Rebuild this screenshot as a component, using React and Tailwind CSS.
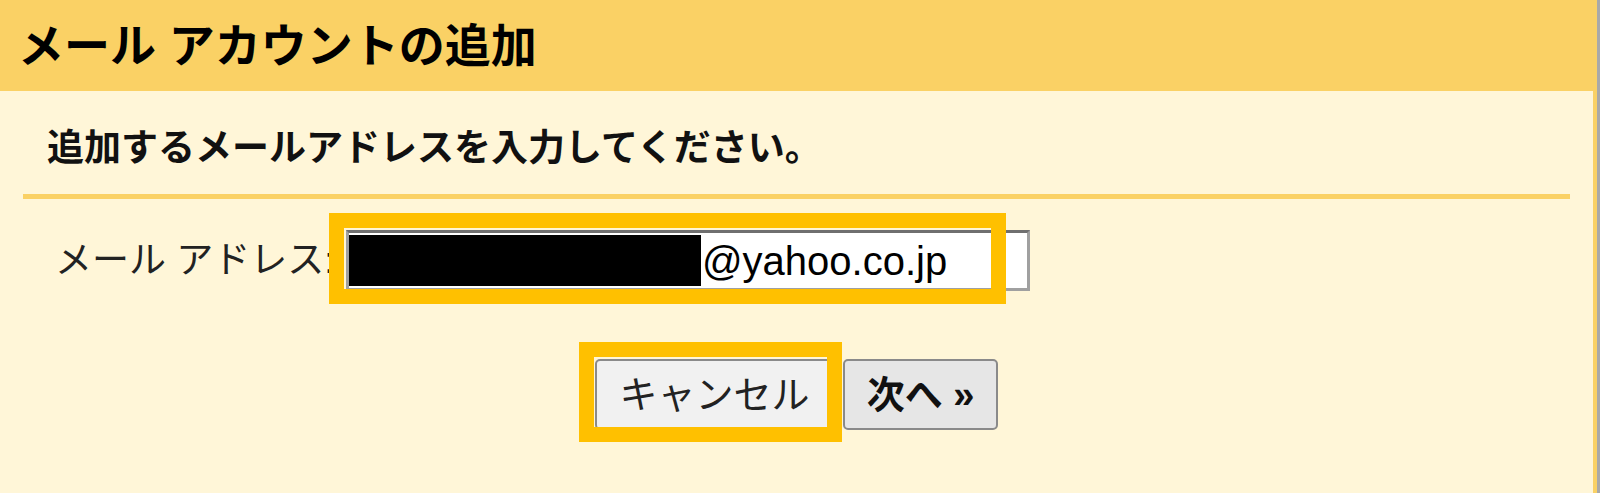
import React from "react";

const font = { fontFamily: '"Liberation Sans", "Noto Sans CJK JP", sans-serif' };

function Highlight({ className }) {
  return <div className={"pointer-events-none absolute border-[15px] border-[#ffc000] " + className} />;
}

export default function App() {
  return (
    <div className="w-full h-[493px] overflow-hidden bg-[#a9a9a9] flex" style={font}>
      <div className="w-[1597px] h-full border-r-4 border-[#fad165] flex flex-col">
        {/* header */}
        <div className="h-[91px] bg-[#fad165] flex items-center pl-[18px]">
          <h1 className="text-[46px] font-bold text-black leading-none">メール アカウントの追加</h1>
        </div>

        {/* body */}
        <div className="flex-1 bg-[#fff6d8] px-[23px]">
          <div className="h-[103px] flex items-center pl-[24px] pt-[12px]">
            <p className="text-[37px] font-bold text-[#111] leading-none">追加するメールアドレスを入力してください。</p>
          </div>
          <div className="h-[5px] bg-[#fad165]" />

          <div className="flex items-center mt-[31px] pl-[32px]">
            <label className="text-[37px] text-[#222] leading-none w-[291px] whitespace-nowrap">メール アドレス:</label>
            <div className="relative">
              <div className="w-[684px] h-[61px] bg-white border-[3px] border-[#a0a0a0] border-t-[#6f6f6f] flex items-center">
                <div className="w-[352px] h-[51px] bg-black" />
                <span className="text-[40px] text-black leading-none ml-[1px]">@yahoo.co.jp</span>
              </div>
              <Highlight className="-left-[17px] -top-[17px] right-[24px] -bottom-[13px]" />
            </div>
          </div>

          <div className="flex justify-center gap-[9px] mt-[68px]">
            <div className="relative">
              <button type="button" className="w-[239px] h-[71px] bg-[#f1f1f1] border-2 border-[#8a8a8a] rounded-[5px] text-[38px] text-[#222] leading-none">キャンセル</button>
              <Highlight className="-left-[16px] -top-[17px] -right-[8px] -bottom-[12px]" />
            </div>
            <button type="button" className="w-[155px] h-[71px] bg-[#e6e6e6] border-2 border-[#8a8a8a] rounded-[5px] text-[38px] font-bold text-[#111] leading-none">次へ »</button>
          </div>
        </div>
      </div>
    </div>
  );
}
